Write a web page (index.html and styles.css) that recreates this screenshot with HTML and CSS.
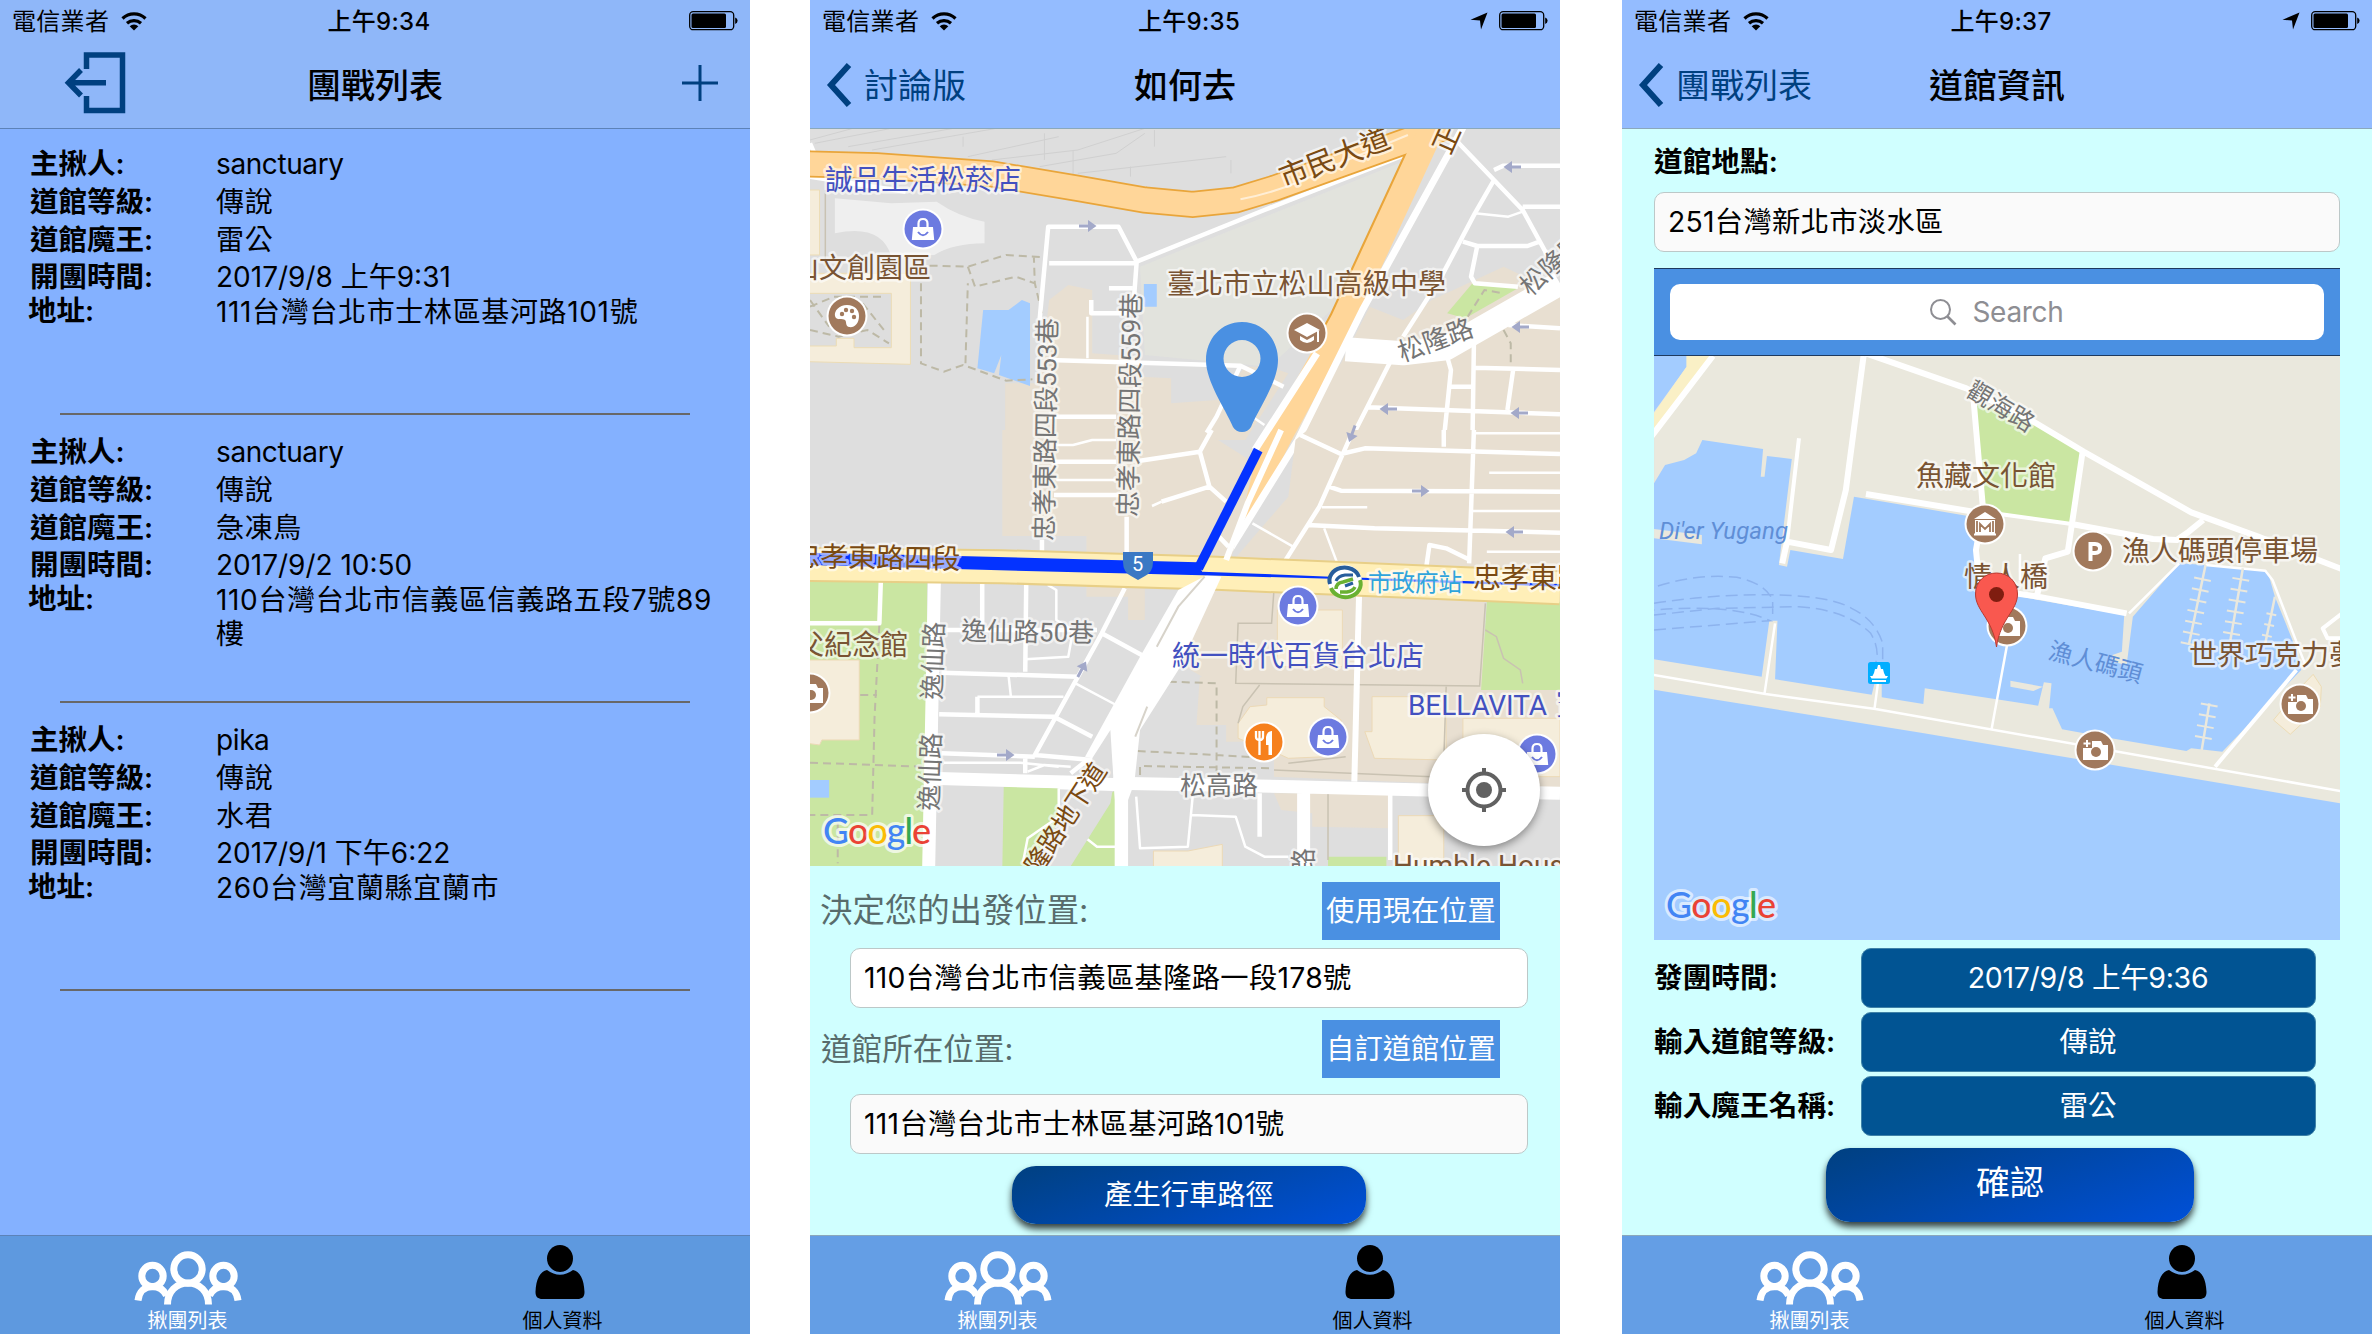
FILE: index.html
```html
<!DOCTYPE html>
<html lang="zh-Hant">
<head>
<meta charset="utf-8">
<title>團戰列表</title>
<link rel="stylesheet" href="styles.css">
</head>
<body>
<svg class="defs" width="0" height="0" aria-hidden="true">
  <defs>
    <symbol id="wifi" viewBox="0 0 26 20"><path d="M1.5 7.5a16.5 16.5 0 0 1 23 0M6 12.3a10.5 10.5 0 0 1 14 0" fill="none" stroke="#000" stroke-width="3.2"/><path d="M13 19.500l-4.300-4.300a6.300 6.300 0 0 1 8.600 0z"/></symbol>
    <symbol id="battery" viewBox="0 0 49 20"><rect x=".7" y=".7" width="44" height="18" rx="3.500" fill="none" stroke="#000" stroke-width="1.300"/><rect x="2.500" y="2.500" width="34.500" height="14.400" rx="1.500"/><path d="M46.200 6.500q2.400 1 2.400 3.200t-2.400 3.200z"/></symbol>
    <symbol id="locate" viewBox="0 0 18 18"><path d="M17.500.5L11 17.500 10 8.500.5 7.800z"/></symbol>
    <symbol id="back" viewBox="0 0 26 44"><path d="M23 2L5 22l18 20" fill="none" stroke="#004080" stroke-width="6"/></symbol>
    <symbol id="group" viewBox="0 0 108 54"><g fill="none" stroke="#fff" stroke-width="7"><circle cx="54" cy="18" r="14.200"/><path d="M33.500 53.500c0-13 9-21.500 20.500-21.500s20.500 8.500 20.500 21.500"/><circle cx="18.500" cy="25" r="10.700"/><circle cx="89.500" cy="25" r="10.700"/><path d="M4 49.500c1-9 7-14 14.500-14 6.500 0 11 3 14 9M104 49.500c-1-9-7-14-14.500-14-6.500 0-11 3-14 9"/></g></symbol>
    <symbol id="person" viewBox="0 0 50 54"><ellipse cx="25" cy="13.500" rx="13" ry="13.500"/><path d="M12 25q13 9.500 26 0c7 1.500 11 9 11.500 22 0 5-2.500 7-7 7h-35c-4.500 0-7-2-7-7 .5-13 4.500-20.500 11.500-22z"/></symbol>
    <g id="oneway"><path d="M-9-1.500h9v-4.500l8.500 6-8.500 6v-4.500h-9z" fill="#a3a9c9"/></g>
    <g id="bag"><circle r="20.500" fill="#fff"/><circle r="18.500" fill="#6c7ae0"/><path d="M-10-2h20l1.200 13h-22.400z" fill="#fff"/><path d="M-4.500-2v-3.500q0-4.500 4.500-4.500t4.500 4.500v3.500" fill="none" stroke="#fff" stroke-width="2.200"/><path d="M-5 3q5 6.500 10 0" fill="none" stroke="#6c7ae0" stroke-width="2"/></g>
    <g id="brown"><circle r="20.500" fill="#fff"/><circle r="18.500" fill="#a1795c"/></g>
    <g id="camera"><use href="#brown"/><path d="M-3-9h9l2 4h5v15h-25v-12h9z" fill="#fff"/><path d="M-8-10v7M-11.500-6.500h7" stroke="#fff" stroke-width="2"/><circle cx="1" cy="2" r="5" fill="#a1795c"/></g>
  </defs>
</svg>
<main class="screens">

  <section class="phone phone--list">
    <header class="top">
      <div class="status"><span class="carrier">電信業者</span><svg class="wifi"><use href="#wifi"/></svg><span class="clock">上午9:34</span><svg class="battery"><use href="#battery"/></svg></div>
      <div class="nav">
        <svg class="exit" viewBox="0 0 62 62"><path d="M22.500 17V3H58.500V58.500H22.500V44" fill="none" stroke="#004080" stroke-width="5.500"/><path d="M4 30.700H42M17 18L4.500 30.700 17 43.500" fill="none" stroke="#004080" stroke-width="5.500"/></svg>
        <h1>團戰列表</h1>
        <svg class="plus" viewBox="0 0 36 36"><path d="M18 0V36M0 18H36" stroke="#004080" stroke-width="3"/></svg>
      </div>
    </header>
    <div class="list">
      <dl class="raid"><dt>主揪人:</dt><dd class="latin">sanctuary</dd><dt>道館等級:</dt><dd>傳說</dd><dt>道館魔王:</dt><dd>雷公</dd><dt>開團時間:</dt><dd class="date">2017/9/8 上午9:31</dd><dt>地址:</dt><dd>111台灣台北市士林區基河路101號</dd></dl>
      <dl class="raid"><dt>主揪人:</dt><dd class="latin">sanctuary</dd><dt>道館等級:</dt><dd>傳說</dd><dt>道館魔王:</dt><dd>急凍鳥</dd><dt>開團時間:</dt><dd class="date">2017/9/2 10:50</dd><dt>地址:</dt><dd>110台灣台北市信義區信義路五段7號89樓</dd></dl>
      <dl class="raid"><dt>主揪人:</dt><dd class="latin">pika</dd><dt>道館等級:</dt><dd>傳說</dd><dt>道館魔王:</dt><dd>水君</dd><dt>開團時間:</dt><dd class="date">2017/9/1 下午6:22</dd><dt>地址:</dt><dd>260台灣宜蘭縣宜蘭市</dd></dl>
    </div>
    <nav class="tabs"><div class="tab tab--on"><svg class="group"><use href="#group"/></svg><span>揪團列表</span></div><div class="tab"><svg class="person"><use href="#person"/></svg><span>個人資料</span></div></nav>
  </section>

  <section class="phone phone--route">
    <header class="top">
      <div class="status"><span class="carrier">電信業者</span><svg class="wifi"><use href="#wifi"/></svg><span class="clock">上午9:35</span><svg class="locate"><use href="#locate"/></svg><svg class="battery"><use href="#battery"/></svg></div>
      <div class="nav"><svg class="back"><use href="#back"/></svg><span class="back-text">討論版</span><h1>如何去</h1></div>
    </header>
    <svg class="map" width="750" height="737" viewBox="0 129 750 737">
      <rect y="129" width="750" height="737" fill="#dedede"/>
      <g class="geo" transform="scale(.47832 .33333)">
        <path fill="#e8dfd1" d="M1170 920L1240 960 1300 900 1450 800 1568 880V1320H960L1110 1090zM408 1150H480L500 900 540 855 590 870V1060L690 1070V1130L755 1135V1210L850 1200 910 1100 960 1100 1000 1120 910 1320H408z"/>
        <path fill="#e2e3dd" d="M1265 470L690 800 700 1065 960 1100 1090 930z"/>
        <path fill="#efefef" d="M52 595L170 610 265 605Q310 650 365 665V730Q300 730 260 765L170 770Q150 670 52 700z"/>
        <path fill="#f5eddb" stroke="#ecdcb5" d="M-5 570H20V765H-5zM-5 820H210V1093L-5 1085V1038H55V1015H92V1043H170V880H-5z"/>
        <path fill="#a3ccff" d="M350 1105L362 930H415L443 900 460 910V1158L395 1125 400 1065 385 1120zM698 852H725V920H698z"/>
        <path fill="#cae6a2" d="M1385 850L1480 865 1370 955 1332 940z"/>
        <path class="rail" d="M0 420L90 385M10 430L170 385M80 440L300 385M130 450L390 385M330 470L520 410M380 480L560 450 700 385M480 500L640 460 700 400M560 520L870 470M550 450V530M670 500V530M880 480V520M320 410V440M490 400V480M720 390V440"/>
        <path class="foot" d="M250 797L330 800 410 765 495 772M330 800L345 860 430 830 470 850 468 770M232 850V1090L280 1115 320 1095 410 1142 465 1138M325 1090L330 850M485 940L470 850M0 920L50 890 150 890M0 990L60 1010 120 990 165 1030M0 900L40 980M110 910L160 1000M1375 950L1410 870 1450 880M1450 990L1465 1030V1100"/>
        <path class="edge" d="M32 570V800"/>
        <g class="road">
          <path d="M480 960L498 680H645L683 785 675 940M683 785L950 630 1270 450M500 790H680M500 1080L900 1097 990 1160M0 530L200 575M0 430L12 470"/>
          <path d="M588 900V940H670M500 1250H640M625 865H675M900 1097L850 1250 820 1320"/>
          <path class="thin" d="M580 950V1075M925 1250L950 1275"/>
          <path d="M1350 420L1430 540 1490 630 1545 775M1430 540L1390 640 1320 830 1240 1010M1430 510L1450 497H1568M1490 620H1568M1365 725L1395 738H1500L1525 725M1395 738L1382 830 1390 850 1480 860M1460 975L1568 985M1330 1060L1340 1110 1325 1320M1388 1030L1385 1320M1390 1103L1568 1110M1470 1110L1458 1230M1340 1160H1388M1165 1222L1568 1243M1215 1080L1165 1222 1130 1320M1020 1300L1060 1330"/>
          <path class="thin" d="M1390 640L1460 650 1490 635M1390 1295H1568"/>
          <path class="w22" d="M1120 1048L1240 1060 1330 1045 1568 850"/>
        </g>
        <path class="hw-case" d="M-10 492L140 497 380 522 560 565 700 600 800 613 890 600 970 565 1330 380"/>
        <path class="hw-case diag" d="M1309 340L1109 960 1079 1040"/>
        <path class="hw" d="M-10 492L140 497 380 522 560 565 700 600 800 613 890 600 970 565 1330 380"/>
        <path class="hw diag" d="M1315 340L1115 960 985 1300 900 1545"/>
        <path class="road w8" d="M1370 370L1155 930 1020 1320 860 1690M1060 1060L930 1350"/>
        <path d="M900 598Q1000 570 1090 500L1250 405" fill="none" stroke="#fff" opacity=".6" stroke-width="2"/>
      </g>
      <g class="geo" transform="translate(0 430) scale(.47832 .33333)">
        <path fill="#e8dfd1" d="M402 0H820L930 100 880 390 578 400V318H402zM1015 30L1040 0H1568V520L1410 515V770H960L820 740 760 690 840 460H880V400L1000 200zM578 460H655L700 475V570H665V500H578zM815 740H1568V1075L970 1040V935H870V885H808zM970 1090H1215V1195L1050 1190V1150L985 1140z"/>
        <path fill="#cae6a2" d="M0 450H245V1320H0zM405 1070L520 1075V1160L545 1200 480 1320H402zM628 1090L640 1080V1320H535zM1415 515H1568V780H1403zM1083 1280H1205V1320H1083z"/>
        <path fill="#f5eddb" stroke="#ecd9b6" d="M-5 690H103V930H25L20 945-5 940zM977 540H1113V710H977zM955 803H1075V830L1110 870 1120 950 1080 980 1000 985 970 965 895 925V880L920 830 955 825zM1175 800H1330V990L1180 985 1160 905H1175zM1365 865H1568V1040H1365zM718 1263H790L862 1243V1320H718zM1230 1157H1325V1320H1230z"/>
        <path fill="#a3ccff" d="M0 1050H40V1103H0z"/>
        <path class="foot" d="M145 585L135 860 130 1155H0M0 998L235 1010M750 755L850 760V1030M685 963L850 975 970 985M690 1035V1008L970 1015M58 1180V1300M105 795H140"/>
        <path class="edge" d="M970 480L965 580H895L890 760 1400 768 1412 520M940 765L905 830 895 880M1330 770L1325 990M970 1020L1300 1040M1083 1090V1290M1412 600L1435 620 1450 685 1485 720 1490 760M1000 1000L1120 980"/>
        <g class="road">
          <path class="thin" d="M497 465L515 480V570L550 600 540 680 450 688M415 735L420 800M350 800H530M555 760L640 825M280 998H440L520 1010M455 1025L490 1005 545 1010M1420 128H1568M1385 243H1568M1070 232H1165M1415 365H1568M925 280L1010 350M1075 295L1105 410M515 150H640M515 45H550L590 30H640M735 215L715 228M800 1100L790 1250 690 1255 682 1100M797 1155L890 1160 910 1250 950 1280H1000M520 1075V1160L600 1250H640M520 1160L455 1225 445 1300M1568 10H1390"/>
          <path d="M360 460V600M452 465L450 725M285 600H600M658 475L610 610 470 975 590 990M610 610L700 680M275 728L560 740M270 853L510 860 590 920M275 970L470 980M350 850V800M450 985V1030M148 455L145 580H0M485 330V400M662 260V390M512 95H640M690 92L815 65 840 0M815 65L835 170 870 215M835 170L735 215M510 195H650M1025 15L1110 72 1160 55 1568 72M1130 20L1065 230 990 400M1085 170L1110 182 1568 185M1040 285L1180 295 1568 308M1388 0L1378 400M1288 415L1295 345 1330 355 1380 390M1325 0V50M855 320L875 350M940 1090V1220M1213 1090V1290M545 1030L580 990"/>
          <path class="w6" d="M1148 490L1138 1055"/>
          <path class="w13" d="M260 455L248 1320M1032 1085V1320M250 1045L640 1060 1010 1070 1568 1090"/>
        </g>
        <path d="M-10 403L400 410 850 430 1568 473" fill="none" stroke="#e8cf87" stroke-width="35"/>
        <path d="M-10 403L400 410 850 430 1568 473" fill="none" stroke="#ffefb8" stroke-width="31"/>
        <path fill="#fff" d="M830 435L860 440 770 720 690 900 678 1060 665 1110V1320H637V1110L628 900 590 985 575 980 690 680 770 480z"/>
        <path d="M985 0L915 220 870 390" class="road w6"/>
        <path d="M825 440L770 530 725 650M705 830L680 920" fill="none" stroke="#d7d3ca" stroke-width="2"/>
        <path fill="#dedede" d="M625 910L635 1060 628 1120 540 1320H455L575 1050 600 985z"/>
        <path class="road w13" d="M520 1058L650 1064"/>
        <path fill="#0433ff" d="M0 368L310 378 810 397 820 425 1090 440 1568 462V470L1090 446 820 436 560 427 0 405z"/>
        <path d="M937 60L812 415" fill="none" stroke="#0433ff" stroke-width="9.500"/>
      </g>
      <use href="#oneway" x="278" y="226"/><use href="#oneway" transform="translate(702 167) rotate(180)"/><use href="#oneway" transform="translate(710 327) rotate(180)"/><use href="#oneway" transform="translate(578 409) rotate(180)"/><use href="#oneway" transform="translate(709 413) rotate(180)"/><use href="#oneway" transform="translate(542 434) rotate(110)"/><use href="#oneway" x="611" y="491"/><use href="#oneway" transform="translate(704 532) rotate(180)"/><use href="#oneway" transform="translate(272 669) rotate(-62)"/><use href="#oneway" x="196" y="755"/>
      <g class="lbl">
        <g fill="#757575" font-size="26">
          <text transform="translate(243 541) rotate(-89)" textLength="223">忠孝東路四段553巷</text>
          <text transform="translate(327 517) rotate(-89)" textLength="224">忠孝東路四段559巷</text>
          <text transform="translate(720 297) rotate(-42)">松隆路</text>
          <text transform="translate(592 362) rotate(-20)">松隆路</text>
          <text transform="translate(151 640) rotate(1)" textLength="133">逸仙路50巷</text>
          <text transform="translate(131 700) rotate(-88)">逸仙路</text><text transform="translate(128 811) rotate(-88)">逸仙路</text>
          <text x="370" y="795">松高路</text>
          <text transform="translate(503 874) rotate(-90)">路</text>
        </g>
        <g fill="#7a4a12" font-size="28">
          <text transform="translate(474 188) rotate(-21)" font-size="29">市民大道</text>
          <text transform="translate(640 156) rotate(-66)">正</text>
          <text transform="translate(150 569) rotate(1)" text-anchor="end">忠孝東路四段</text>
          <text x="663" y="588">忠孝東路</text>
          <text transform="translate(229 876) rotate(-57)" font-size="26" textLength="126">隆路地下道</text>
        </g>
        <g fill="#795433" font-size="28">
          <text x="121" y="278" text-anchor="end">山文創園區</text>
          <text x="357" y="294" textLength="279">臺北市立松山高級中學</text>
          <text x="98" y="655" text-anchor="end">父紀念館</text>
          <text x="583" y="875" textLength="186">Humble House</text>
        </g>
        <g fill="#4351c0" font-size="28"><text x="15" y="190">誠品生活松菸店</text><text x="362" y="666">統一時代百貨台北店</text><text x="598" y="715" textLength="139">BELLAVITA</text><text x="746" y="715">寶</text></g>
        <text x="558" y="591" fill="#2fa4dc" font-size="23.500">市政府站</text>
      </g>
      <path d="M313 552h30v10q0 10-8 14l-7 4-7-4q-8-4-8-14z" fill="#3a78c4"/><text class="shield" x="327.500" y="571" text-anchor="middle">5</text>
      <g transform="translate(535 582)"><circle r="17" fill="#fff"/><path d="M-15 2A15 13 0 0 1 14-5" fill="none" stroke="#275d9c" stroke-width="4"/><path d="M15-2A15 13 0 0 1-14 6" fill="none" stroke="#69b132" stroke-width="4"/><path d="M-9 7q0-6 7-7l10-3M-5 10h7q6-1 8-5" fill="none" stroke="#69b132" stroke-width="3.500"/><path d="M-9-1q2-5 9-6h8M0 4l8-3" fill="none" stroke="#275d9c" stroke-width="3"/></g>
      <use href="#bag" x="113" y="229"/><use href="#bag" x="488" y="606"/><use href="#bag" x="518" y="737"/><use href="#bag" x="727" y="754"/><use href="#camera" x="0" y="693"/>
      <g transform="translate(37 316)"><use href="#brown"/><path d="M0-11c8 0 12 5 12 11 0 8-5 12-10 11-4-1-2-5-4-7s-9 1-10-4 4-11 12-11z" fill="#fff"/><g fill="#a1795c"><circle cx="-5" cy="-2" r="2.200"/><circle cx="-1" cy="-6" r="2.200"/><circle cx="5" cy="-5" r="2.200"/><circle cx="7" cy="1" r="2.200"/></g></g>
      <g transform="translate(497 333)"><use href="#brown"/><path d="M0-10L13-3 0 4-13-3zM-7 3L0 7 7 3V7Q0 13-7 7zM10-2h2v11h-2z" fill="#fff"/></g>
      <g transform="translate(454 742)"><circle r="20.500" fill="#fff"/><circle r="18.500" fill="#f6801d"/><path d="M-8-11v6q0 3 3.500 3t3.500-3v-6M-4.500-11V13" fill="none" stroke="#fff" stroke-width="2.300"/><path d="M8-11V13H4.500V3H2V-5q1-6 6-6z" fill="#fff"/></g>
      <path fill="#4a90e2" fill-rule="evenodd" d="M432 322c21 0 36 17 36 38 0 22-19 48-27 67q-3 5-9 5t-9-5c-8-19-27-45-27-67 0-21 15-38 36-38zM432 340a18 18 0 1 0 0 37 18 18 0 1 0 0-37z"/>
      <text class="google" x="13" y="844" textLength="108" stroke-opacity=".7"><tspan fill="#4285f4">G</tspan><tspan fill="#ea4335">o</tspan><tspan fill="#fbbc05">o</tspan><tspan fill="#4285f4">g</tspan><tspan fill="#34a853">l</tspan><tspan fill="#ea4335">e</tspan></text>
      <g transform="translate(674 790)" class="mylocation"><circle r="56" fill="#fff"/></g>
      <g transform="translate(674 790)"><circle r="16.500" fill="none" stroke="#616161" stroke-width="4"/><circle r="8" fill="#616161"/><path d="M0-22v6M0 22v-6M-22 0h6M22 0h-6" stroke="#616161" stroke-width="4"/></g>
    </svg>
    <div class="route">
      <div class="route-row"><span class="q q--first">決定您的出發位置:</span><button class="flat">使用現在位置</button></div>
      <div class="field field--white">110台灣台北市信義區基隆路一段178號</div>
      <div class="route-row route-row--second"><span class="q">道館所在位置:</span><button class="flat">自訂道館位置</button></div>
      <div class="field">111台灣台北市士林區基河路101號</div>
      <button class="pill pill--route">產生行車路徑</button>
    </div>
    <nav class="tabs"><div class="tab tab--on"><svg class="group"><use href="#group"/></svg><span>揪團列表</span></div><div class="tab"><svg class="person"><use href="#person"/></svg><span>個人資料</span></div></nav>
  </section>

  <section class="phone">
    <header class="top">
      <div class="status"><span class="carrier">電信業者</span><svg class="wifi"><use href="#wifi"/></svg><span class="clock">上午9:37</span><svg class="locate"><use href="#locate"/></svg><svg class="battery"><use href="#battery"/></svg></div>
      <div class="nav"><svg class="back"><use href="#back"/></svg><span class="back-text">團戰列表</span><h1>道館資訊</h1></div>
    </header>
    <div class="gym">
      <div class="gym-label">道館地點:</div>
      <div class="field">251台灣新北市淡水區</div>
      <div class="search"><div class="search-box"><svg class="lens" viewBox="0 0 27 27"><circle cx="10.500" cy="10.500" r="9.500" fill="none" stroke="#8e8e93" stroke-width="2"/><path d="M17.500 17.500L25.500 25.500" stroke="#8e8e93" stroke-width="2.600"/></svg><span>Search</span></div></div>
      <svg class="map" width="686" height="584" viewBox="32 356 686 584">
        <rect x="32" y="356" width="686" height="584" fill="#a3ccff"/>
        <g class="geo" transform="translate(0 350) scale(.47832 .33333)">
          <path fill="#eae8dd" d="M67 18V400L90 345 130 330 155 310 168 270 295 297 290 380H298L303 318 355 327 328 645 345 650 352 600 462 627 485 440 720 497 738 500V600L745 715 870 750 1050 795 1045 905 1025 915V935L1055 945 1068 800 1165 640 1220 645 1300 655 1350 665 1365 740 1410 900 1420 960 1255 1205 1190 1195 1180 1203 1035 1168 920 1138 900 1075H893L898 1000 882 997 870 1067 633 1015 630 1062 543 1042V1000H528L522 1034 320 988 325 812H308L292 980 60 926V1018L625 1148 1510 1362V18z"/>
          <path fill="#eae8dd" d="M812 992L880 1010 860 1023 812 1010zM67 537L167 555V583L67 565z"/>
          <path fill="#a3ccff" d="M60 18H135V50L60 200z"/><path fill="#faf0c6" d="M135 18H190L67 255V190L135 50z"/>
          <path fill="#cae6a2" d="M740 160L860 215 960 305 940 522 757 480z"/>
          <path fill="#f5eddb" stroke="#ecdcb5" d="M1445 973L1462 1010 1460 1070 1397 1153 1362 1110 1420 1010z"/>
          <g class="road">
            <path class="w6" d="M190 18L60 262M505 18L468 420 437 600 345 575 335 640M510 10L720 115 860 215 965 305 1190 487 1330 560 1510 660M735 150L755 480 740 600 748 715 870 740 1055 790M510 432L755 490M940 522L1110 567 1160 570 1185 545 1215 510M963 305L932 605 885 625 868 735"/>
            <path class="w4" d="M370 265L345 575M755 485L940 522M1510 785L1465 835 1475 865 1510 865"/>
            <path class="w2" d="M832 612V690M1165 640L1060 790M1220 645L1345 662 1360 690 1430 950M60 973L300 1032 530 1077 1510 1325M805 885L773 1135M320 820L298 1030M535 1000L528 1075"/>
            <path class="w4" d="M1410 960L1240 1250"/>
          </g>
          <g class="dock"><path d="M1220 645L1185 885M1298 655L1272 870M1365 740L1345 880M1228 1060L1212 1200"/><path class="slips" d="M1214 685L1185 885M1294 685L1272 870"/><path class="slips slips--short" d="M1358 790L1345 880"/><path class="slips" d="M1228 1062L1212 1190"/></g>
          <path d="M75 708Q160 670 240 682 300 700 315 750V810M67 760Q200 730 330 735 440 740 480 775 530 810 545 880V930M67 795L200 775 370 770Q470 780 520 850 540 900 530 940M67 840L310 812Q230 760 67 780" fill="none" stroke="#8db3ee" stroke-width="1.500" stroke-dasharray="12 6"/>
        </g>
        <g class="lbl">
          <text transform="translate(343 395) rotate(31)" fill="#757575" font-size="24.500">觀海路</text>
          <g fill="#795433" font-size="28"><text x="294" y="486">魚藏文化館</text><text x="500" y="561">漁人碼頭停車場</text><text x="342" y="587">情人橋</text><text x="567" y="665" textLength="168">世界巧克力夢</text></g>
          <text class="sea" x="37" y="539" textLength="129">Di'er Yugang</text>
          <text class="sea sea--cjk" transform="translate(425 658) rotate(15)">漁人碼頭</text>
        </g>
        <g transform="translate(363 524)"><use href="#brown"/><path d="M0-12L11-5H-11zM-10-4h20v14h-20z" fill="#fff"/><path d="M-11 10.500h22" stroke="#fff" stroke-width="2"/><path d="M-5 8v-8l5 5 5-5v8M-8-3v11M8-3v11" fill="none" stroke="#a1795c" stroke-width="1.800"/></g>
        <g transform="translate(471 551)"><use href="#brown"/><path d="M-2.500 10V-7H2q5 0 5 4.500T2 2H-2" fill="none" stroke="#fff" stroke-width="4"/></g>
        <use href="#camera" x="385" y="626"/><use href="#camera" x="473" y="750"/><use href="#camera" x="678" y="704"/>
        <g transform="translate(257 673)"><rect x="-11" y="-11" width="22" height="22" rx="2.500" fill="#00aeff"/><path d="M-7 4l2-4 1-4h2l1-4h2l1 4h2l1 4 2 4zM-9 3h18l-1.500 2.500h-15zM-7 7h14v2h-14z" fill="#fff"/></g>
        <path d="M374.500 573c12 0 21 9 21 21 0 17-17 24-21 53-4-29-21-36-21-53 0-12 9-21 21-21z" fill="#f9584f" stroke="#b93a32"/><circle cx="374.500" cy="594.500" r="7.500" fill="#7f1d10"/>
        <text class="google" x="44" y="918" textLength="110" stroke-opacity=".6"><tspan fill="#4285f4">G</tspan><tspan fill="#ea4335">o</tspan><tspan fill="#fbbc05">o</tspan><tspan fill="#4285f4">g</tspan><tspan fill="#34a853">l</tspan><tspan fill="#ea4335">e</tspan></text>
      </svg>
      <div class="form">
        <span>發團時間:</span><div class="value value--date">2017/9/8 上午9:36</div>
        <span>輸入道館等級:</span><div class="value">傳說</div>
        <span>輸入魔王名稱:</span><div class="value">雷公</div>
      </div>
      <button class="pill pill--ok">確認</button>
    </div>
    <nav class="tabs"><div class="tab tab--on"><svg class="group"><use href="#group"/></svg><span>揪團列表</span></div><div class="tab"><svg class="person"><use href="#person"/></svg><span>個人資料</span></div></nav>
  </section>
</main>
</body>
</html>
```

FILE: styles.css
```css
* { box-sizing: border-box; }
body { margin: 0; background: #fff; color: #000; font-family: Inter, "Noto Sans CJK TC", sans-serif; font-size: 28px; overflow: hidden; }
.defs { position: absolute; }
.screens { display: flex; width: 2372px; height: 1334px; }
.phone { width: 750px; height: 1334px; flex: none; display: flex; flex-direction: column; background: #d0ffff; }
.phone--list { background: #84b1ff; }
.phone--route { margin: 0 62px 0 60px; }
svg { display: block; flex: none; }

.top { height: 129px; flex: none; background: #94bcff; border-bottom: 1px solid #8ba8bb; }
.phone--list .top { background: #8fb7f9; border-color: #5c82b8; }
.status { height: 40px; display: grid; grid-template-columns: 110px 1fr auto 1fr 27px 51px; align-items: center; padding: 0 12px 0 12px; font-size: 24px; line-height: 40px; }
.carrier { grid-column: 1; white-space: nowrap; padding-top: 2px; letter-spacing: .3px; }
.wifi { grid-column: 2; width: 26px; height: 20px; margin-left: -1px; }
.clock { grid-column: 3; font-weight: 500; letter-spacing: .3px; padding-top: 2px; transform: translateX(-12px); }
.locate { grid-column: 5; width: 18px; height: 18px; }
.battery { grid-column: 6; width: 49px; height: 20px; justify-self: end; }
.status > * { grid-row: 1; }
.nav { height: 88px; display: grid; grid-template-columns: 1fr auto 1fr; align-items: center; }
.nav > * { grid-row: 1; }
.nav h1 { grid-column: 2; margin: 0; font-size: 34px; font-weight: 500; line-height: 88px; padding-top: 2px; }
.exit { grid-column: 1; width: 62px; height: 62px; margin: -5px 0 0 64px; }
.plus { grid-column: 3; width: 36px; height: 36px; justify-self: end; margin: -5px 32px 0 0; }
.back { grid-column: 1; width: 26px; height: 44px; margin-left: 16px; }
.back-text { grid-column: 1; padding: 2px 0 0 54px; font-size: 34px; color: #004080; line-height: 88px; }

.list { flex: 1; }
.raid { margin: 0; height: 288px; padding: 16px 38px 0 30px; display: grid; grid-template-columns: 186px 1fr; grid-template-rows: 38px 38px 37px 36px 120px; font-size: 28.500px; line-height: 38px; background: linear-gradient(#686868, #686868) 60px 284px / 630px 2px no-repeat; }
.raid dt { font-weight: 600; white-space: nowrap; }
.raid dt:nth-of-type(5) { margin: -2px 0 0 -2px; }
.raid dd { margin: 0; font-size: 28px; letter-spacing: .65px; }
.raid dd.latin { letter-spacing: -.4px; }
.raid dd.date { letter-spacing: 0; }
.raid dd:last-child { line-height: 34px; padding-top: 1px; word-break: break-all; }

.tabs { height: 99px; flex: none; margin-top: auto; display: flex; background: #649ee5; border-top: 1px solid #8ba8bb; }
.phone--list .tabs { background: #5e99df; border-color: #5c82b8; }
.tab { flex: 1; display: flex; flex-direction: column; align-items: center; font-size: 20px; line-height: 24px; }
.tab--on { color: #fff; }
.group { width: 108px; height: 54px; margin-top: 15px; }
.person { width: 50px; height: 54px; margin: 9px 5px 6px 0; }
.tab span { margin-top: 4px; }

.geo * { vector-effect: non-scaling-stroke; }
.road, .road path, path.road { fill: none; stroke: #fff; stroke-width: 4.500px; stroke-linejoin: round; }
.road .thin, .road .w2 { stroke-width: 2.500px; }
.road .w4 { stroke-width: 4px; }
.road .w6, path.road.w6 { stroke-width: 6px; }
path.road.w8 { stroke-width: 7px; }
.road .w13, path.road.w13 { stroke-width: 13px; }
.road .w22 { stroke-width: 24px; }
.rail { fill: none; stroke: #d0d0d0; stroke-width: 1px; }
.foot { fill: none; stroke: #bdb9a6; stroke-width: 2px; stroke-dasharray: 8 5; }
.edge { fill: none; stroke: #c9c2b2; stroke-width: 1.500px; }
.hw-case { fill: none; stroke: #e9a53a; stroke-width: 27px; }
.hw { fill: none; stroke: #ffd699; stroke-width: 23.500px; }
.hw-case.diag { stroke-width: 24px; }
.hw.diag { stroke-width: 25px; }
.dock path { fill: none; stroke: #eae8dd; stroke-width: 2.500px; }
.dock .slips { stroke-width: 17px; stroke-dasharray: 2 9; }
.dock .slips--short { stroke-width: 10px; }
.lbl { font-family: Roboto, "Noto Sans CJK TC", sans-serif; }
.lbl text { stroke: rgba(255,255,255,.6); stroke-width: 5px; stroke-linejoin: round; paint-order: stroke; }
.lbl text.sea { fill: #5f8ed6; stroke: none; font-size: 24px; font-style: italic; }
.lbl text.sea--cjk { font-style: normal; }
.shield { font: 20px Roboto, sans-serif; fill: #fff; }
.google { font-family: Lato, sans-serif; font-size: 36px; font-weight: 500; stroke: #fff; stroke-width: 6px; paint-order: stroke; stroke-linejoin: round; }
.mylocation { filter: drop-shadow(0 3px 4px rgba(0,0,0,.4)); }

button { border: 0; padding: 0; font: inherit; color: #fff; }
.field { height: 60px; border: 1px solid #bcc8c8; border-radius: 10px; background: #fafafa; padding-left: 13px; line-height: 58px; font-size: 28.300px; letter-spacing: .3px; white-space: nowrap; }
.field--white { background: #fff; }
.route { padding: 16px 32px 0 40px; display: flex; flex-direction: column; }
.route-row { height: 58px; display: flex; align-items: center; justify-content: space-between; margin: 0 28px 8px -30px; }
.route-row--second { margin-top: 12px; margin-bottom: 16px; }
.q { color: #586c6c; font-size: 30.600px; line-height: 58px; padding-left: 1px; }
.q--first { font-size: 32.400px; padding-left: 0; }
.flat { width: 178px; height: 58px; background: #4a90e2; font-size: 28.300px; line-height: 58px; }
.pill { color: #fff; background: linear-gradient(160deg, #004080, #0050d8); box-shadow: 0 5px 7px rgba(0,0,0,.75); border-radius: 24px; }
.pill--route { width: 354px; height: 58px; margin: 12px 0 0 162px; font-size: 28.300px; line-height: 58px; }

.gym { padding: 14px 32px 0; }
.gym-label { height: 49px; line-height: 38px; font-size: 28.700px; font-weight: 600; }
.search { margin-top: 16px; height: 88px; padding: 15px 16px; background: #4a90e2; border: 1px solid #1e3a5f; border-width: 1px 0; }
.search-box { height: 56px; border-radius: 10px; background: #fff; display: flex; align-items: center; justify-content: center; gap: 15px; color: #8e8e93; font-size: 28px; letter-spacing: -.3px; }
.lens { width: 27px; height: 27px; }
.form { display: grid; grid-template-columns: 206.500px 455px; grid-auto-rows: 60px; row-gap: 4px; margin-top: 8px; font-size: 28.700px; font-weight: 600; line-height: 59px; white-space: nowrap; }
.value { background: #015493; color: #fff; border: 1px solid #3f82a8; border-radius: 10px; font-size: 28.500px; font-weight: 400; text-align: center; line-height: 57px; }
.value--date { letter-spacing: -.3px; }
.pill--ok { display: block; width: 368px; height: 74px; margin: 12px 0 0 172px; font-size: 34px; line-height: 70px; padding-bottom: 4px; }
```
